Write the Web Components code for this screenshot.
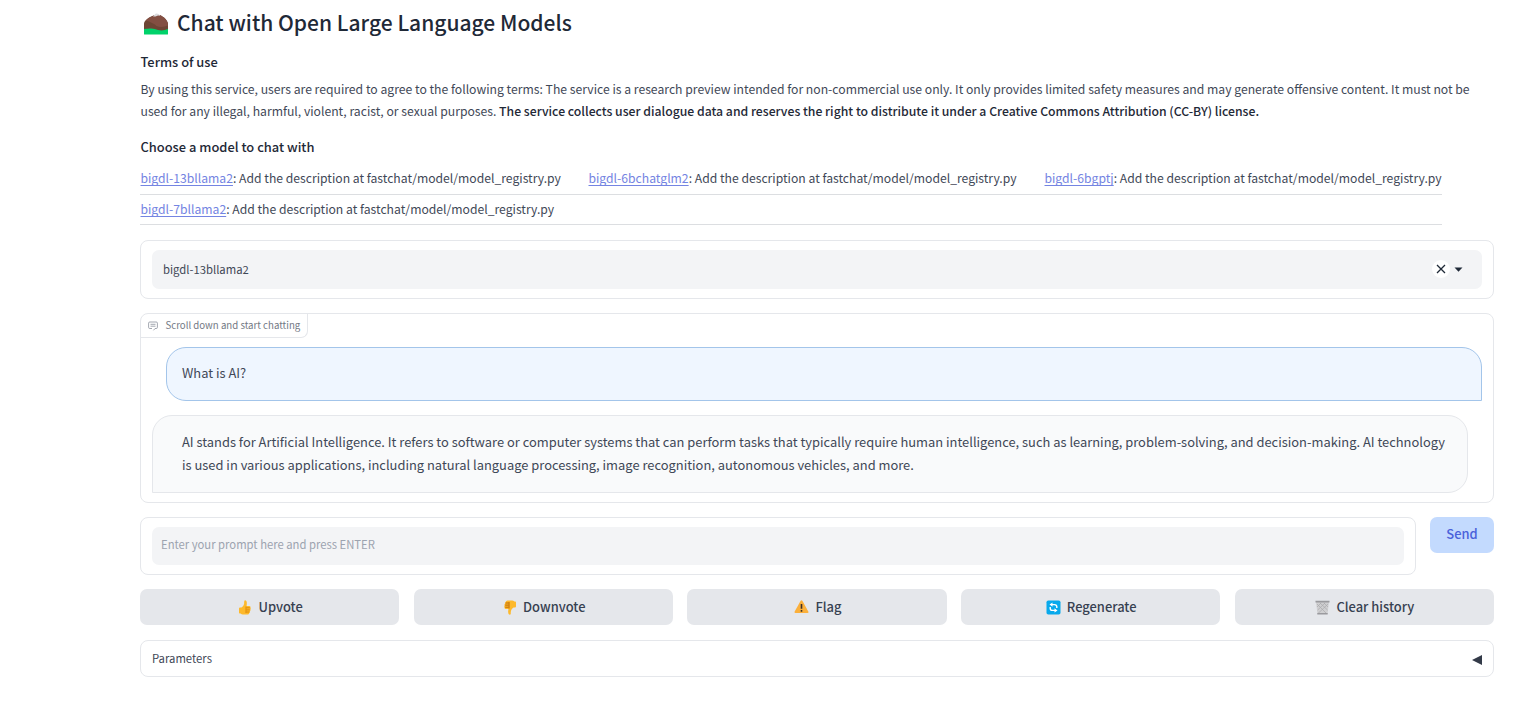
<!DOCTYPE html>
<html lang="en">
<head>
<meta charset="utf-8">
<title>Chat with Open Large Language Models</title>
<style>
body{margin:0;background:#fff;font-family:"Noto Sans CJK SC","Noto Sans",sans-serif;color:#1f2937;--line:#e5e7eb;--text:#3f4857}
</style>
</head>
<body>
<chat-app></chat-app>
<script>
function define(name, html){
  const t=document.createElement('template');
  t.innerHTML=html;
  customElements.define(name,class extends HTMLElement{
    constructor(){super();this.attachShadow({mode:'open'}).append(t.content.cloneNode(true));}
  });
}

define('intro-text',`<style>
:host{display:block;height:225px;box-sizing:border-box;padding-top:5px}
h1{margin:0;font-size:21.02px;font-weight:500;line-height:34px;display:flex;align-items:center;height:34px;white-space:nowrap}
h1 svg{width:24px;height:22px;margin:3px 9px 0 4px}
h3{margin:0;padding-left:.5px;font-size:12.88px;font-weight:500;line-height:22px}
h3.a{margin-top:12px}
h3.b{margin-top:14px}
p{margin:5px 0 0;padding-left:.5px;font-size:12.193px;line-height:22px;color:var(--text);white-space:nowrap}
b{font-weight:500;color:#1f2937;font-size:12.24px}
</style>
<h1><svg viewBox="0 0 24 22"><path d="M0 14.500h24v6.500Q24 21.500 23.400 21.500H.6Q0 21.500 0 21z" fill="#00d26a"/><path d="M0 16V10.500Q0 9 1.500 7.500L6 4L9.500 2.500H16L20 4.500Q24 8 24 11V16Q19 18.200 14 17Q10 15 6 15.500Z" fill="#6d4534"/><path d="M1.500 7.500Q4 4.500 7.500 3.800L11 2H16.500L20 4.500Q24 8 24 12.500Q18 15 12.500 13Q9 9.500 1.500 7.500Z" fill="#834f42"/><path d="M9 3.500L11.500 .8Q13 0 14.500 1L16.500 2.800L14 2.600L11.500 3.400Z" fill="#dcdcdf"/></svg><span>Chat with Open Large Language Models</span></h1>
<h3 class="a">Terms of use</h3>
<p>By using this service, users are required to agree to the following terms: The service is a research preview intended for non-commercial use only. It only provides limited safety measures and may generate offensive content. It must not be<br>used for any illegal, harmful, violent, racist, or sexual purposes. <b>The service collects user dialogue data and reserves the right to distribute it under a Creative Commons Attribution (CC-BY) license.</b></p>
<h3 class="b">Choose a model to chat with</h3>
<slot></slot>`);

define('model-grid',`<style>
:host{display:grid;width:1302px;grid-template-columns:448px 456px 398px;grid-template-rows:31px 30px;margin-top:6px;font-size:12.185px}
::slotted(*){border-bottom:1px solid #dcdee1}
</style><slot></slot>`);

define('model-item',`<style>
:host{display:block;padding-left:.5px;line-height:29px;white-space:nowrap;color:var(--text)}
a{color:#7484e2;text-decoration:underline;text-underline-offset:2px;text-decoration-thickness:1px;text-decoration-skip-ink:none}
</style><a><slot name="name"></slot></a><slot></slot>`);

define('ui-panel',`<style>
:host{display:block;box-sizing:border-box;border:1px solid var(--line);border-radius:8px;background:#fff}
</style><slot></slot>`);

define('model-select',`<style>
:host{display:flex;align-items:center;height:39px;box-sizing:border-box;margin:9px 11px;padding:0 19px 1px 11px;background:#f3f4f6;border-radius:7px;font-size:11.3px;color:var(--text)}
span{flex:1}
i{width:18px;height:18px;border-radius:50%;background:#fff;display:flex;align-items:center;justify-content:center}
.arrow{width:9px;height:5px;margin:1px 0 0 4px}
</style><span><slot></slot></span><i><svg width="10" height="10" viewBox="0 0 10 10"><path d="M1 1l8 8M9 1L1 9" stroke="#1f2937" stroke-width="1.300"/></svg></i><svg class="arrow" viewBox="0 0 9 5"><path d="M.5 .5h8L4.500 4.700z" fill="#1f2937"/></svg>`);

define('chat-label',`<style>
:host{display:flex;align-items:center;box-sizing:border-box;width:167px;height:24px;padding:0 0 1px 7px;border:solid var(--line);border-width:0 1px 1px 0;border-radius:7px 0 7px 0;font-size:9.66px;color:#737985;white-space:nowrap}
svg{margin:1px 7.5px 0 0}
</style><svg width="10" height="10" viewBox="0 0 10 10" fill="none" stroke="#8b919c" stroke-width=".8"><path d="M4 7.500H1.800Q.6 7.500.6 6.400V2.100Q.6 1 1.800 1H8.200Q9.400 1 9.400 2.100V6.400Q9.400 7.500 8.200 7.500H7L5.500 9.300M2.500 3.300h5M2.500 5.200h5"/></svg><slot></slot>`);

define('chat-message',`<style>
:host{display:block;box-sizing:border-box;font-size:12.9px;line-height:23px;color:var(--text);white-space:nowrap;border:1px solid}
:host([from=user]){margin:9px 11px 0 25px;height:54px;padding:13px 15px;background:#eff6ff;border-color:#a3c5ea;border-radius:20px 20px 0 20px}
:host([from=bot]){margin:14px 25px 9px 11px;height:78px;padding:14px 29px;background:#f9fafb;border-color:var(--line);border-radius:20px 20px 20px 0}
</style><slot></slot>`);

define('prompt-field',`<style>
:host{display:block;height:38px;line-height:35px;margin:9px 11px;padding:0 9px;box-sizing:border-box;background:#f3f4f6;border-radius:7px;font-size:11.27px;color:#9ca3af}
</style><slot></slot>`);

define('ui-button',`<style>
:host{display:flex;align-items:center;justify-content:center;height:36px;box-sizing:border-box;padding:0 0 1px 2px;border-radius:7px;background:#e5e7eb;color:#374151;font-size:12.92px;font-weight:500;white-space:nowrap}
:host([primary]){background:#c3dafe;color:#4a61da;width:64px;padding:0 0 3px}
::slotted(svg){margin-right:6px;margin-top:1px}
</style><slot name="icon"></slot><slot></slot>`);

define('ui-accordion',`<style>
:host{display:flex;align-items:center;justify-content:space-between;height:35px;box-sizing:border-box;padding:0 11px 1px;font-size:11.3px;color:var(--text)}
svg{margin-top:3px}
</style><slot></slot><svg width="10" height="10" viewBox="0 0 10 10"><path d="M0 5L10 0V10z" fill="#333a48"/></svg>`);

define('chat-app',`<style>
:host{display:block;width:1354px;margin-left:140px}
.select{margin-top:15px;height:59px}
.chat{margin-top:14px;height:190px}
.row{display:flex;gap:14px;margin-top:14px;align-items:flex-start}
.prompt{flex:1;height:58px}
.actions{display:grid;grid-template-columns:repeat(5,1fr);gap:14.5px;margin-top:14px}
.params{margin-top:15px;height:37px}
</style>
<intro-text><model-grid>
<model-item><span slot="name">bigdl-13bllama2</span>: Add the description at fastchat/model/model_registry.py</model-item>
<model-item><span slot="name">bigdl-6bchatglm2</span>: Add the description at fastchat/model/model_registry.py</model-item>
<model-item><span slot="name">bigdl-6bgptj</span>: Add the description at fastchat/model/model_registry.py</model-item>
<model-item style="grid-column:1/-1"><span slot="name">bigdl-7bllama2</span>: Add the description at fastchat/model/model_registry.py</model-item>
</model-grid></intro-text>
<ui-panel class="select"><model-select>bigdl-13bllama2</model-select></ui-panel>
<ui-panel class="chat"><chat-label>Scroll down and start chatting</chat-label>
<chat-message from="user">What is AI?</chat-message>
<chat-message from="bot">AI stands for Artificial Intelligence. It refers to software or computer systems that can perform tasks that typically require human intelligence, such as learning, problem-solving, and decision-making. AI technology<br>is used in various applications, including natural language processing, image recognition, autonomous vehicles, and more.</chat-message></ui-panel>
<div class="row"><ui-panel class="prompt"><prompt-field>Enter your prompt here and press ENTER</prompt-field></ui-panel><ui-button primary>Send</ui-button></div>
<div class="actions">
<ui-button><svg slot="icon" width="14" height="15" viewBox="0 0 14 15"><path d="M5.200 6Q6.500 4 6.200 1.500Q6.300.3 7.300.3Q9.200.8 8.800 4.200L8.600 6H11.500Q12.700 6.200 12.500 7.500Q13 8.300 12.500 9.300Q12.800 10.400 12 11.200Q12.200 12.300 11.300 12.900Q11 14.500 9.500 14.500H5Q3.500 14.300 2.600 13.500H1.700Q1 13.500 1 12.500V8.500Q1 7.600 2 7.600H3.500Z" fill="#fdb92c"/><path d="M8.500 7.800h3.300M8.500 9.900h3.300M8.500 12h2.800M8 6.500v6.500" stroke="#d67d00" stroke-width=".8"/></svg>Upvote</ui-button>
<ui-button><svg slot="icon" width="14" height="15" viewBox="0 0 14 15"><g transform="translate(0 15) scale(1 -1) translate(14 0) scale(-1 1)"><path d="M5.200 6Q6.500 4 6.200 1.500Q6.300.3 7.300.3Q9.200.8 8.800 4.200L8.600 6H11.500Q12.700 6.200 12.500 7.500Q13 8.300 12.500 9.300Q12.800 10.400 12 11.200Q12.200 12.300 11.300 12.900Q11 14.500 9.500 14.500H5Q3.500 14.300 2.600 13.500H1.700Q1 13.500 1 12.500V8.500Q1 7.600 2 7.600H3.500Z" fill="#fdb92c"/><path d="M8.500 7.800h3.300M8.500 9.900h3.300M8.500 12h2.800M8 6.500v6.500" stroke="#b86200" stroke-width=".9"/></g></svg>Downvote</ui-button>
<ui-button><svg slot="icon" width="15" height="14" viewBox="0 0 15 14"><path d="M6.500 1Q7.500-.3 8.500 1L14.300 11.500Q15 13 13.500 13H1.500Q0 13 .7 11.500Z" fill="#fbb03b"/><path d="M7.500 4v4.700M7.500 10v1.700" stroke="#3c3028" stroke-width="1.600"/></svg>Flag</ui-button>
<ui-button style="padding-left:1px"><svg slot="icon" width="15" height="15" viewBox="0 0 15 15"><rect x=".5" y=".5" width="14" height="14" rx="1.800" fill="#08a9ec"/><path d="M5.500 4.600H8.500Q10.800 4.600 10.800 6.800V8M9.500 10.400H6.500Q4.200 10.400 4.200 8.200V7" fill="none" stroke="#fff" stroke-width="1.400"/><path d="M6.500 2.500V6.700L3.500 4.600zM8.500 8.300V12.500L11.500 10.400z" fill="#fff"/></svg>Regenerate</ui-button>
<ui-button style="padding-left:1px"><svg slot="icon" width="15" height="15" viewBox="0 0 15 15"><path d="M1 2H14L12.500 14H2.500Z" fill="#cfcfd1"/><path d="M2 4L11.500 13.500M5 3L12.500 10M9 3L13 7M13 4L3 13.500M10 3L2.700 10M6 3L2 7" stroke="#a9a9ac" stroke-width=".7"/><path d="M.5 .7h14v1.800H.5zM2.300 13h10.400v1.500H2.300z" fill="#9a9a9e"/></svg>Clear history</ui-button>
</div>
<ui-panel class="params"><ui-accordion>Parameters</ui-accordion></ui-panel>`);
</script>
</body>
</html>
